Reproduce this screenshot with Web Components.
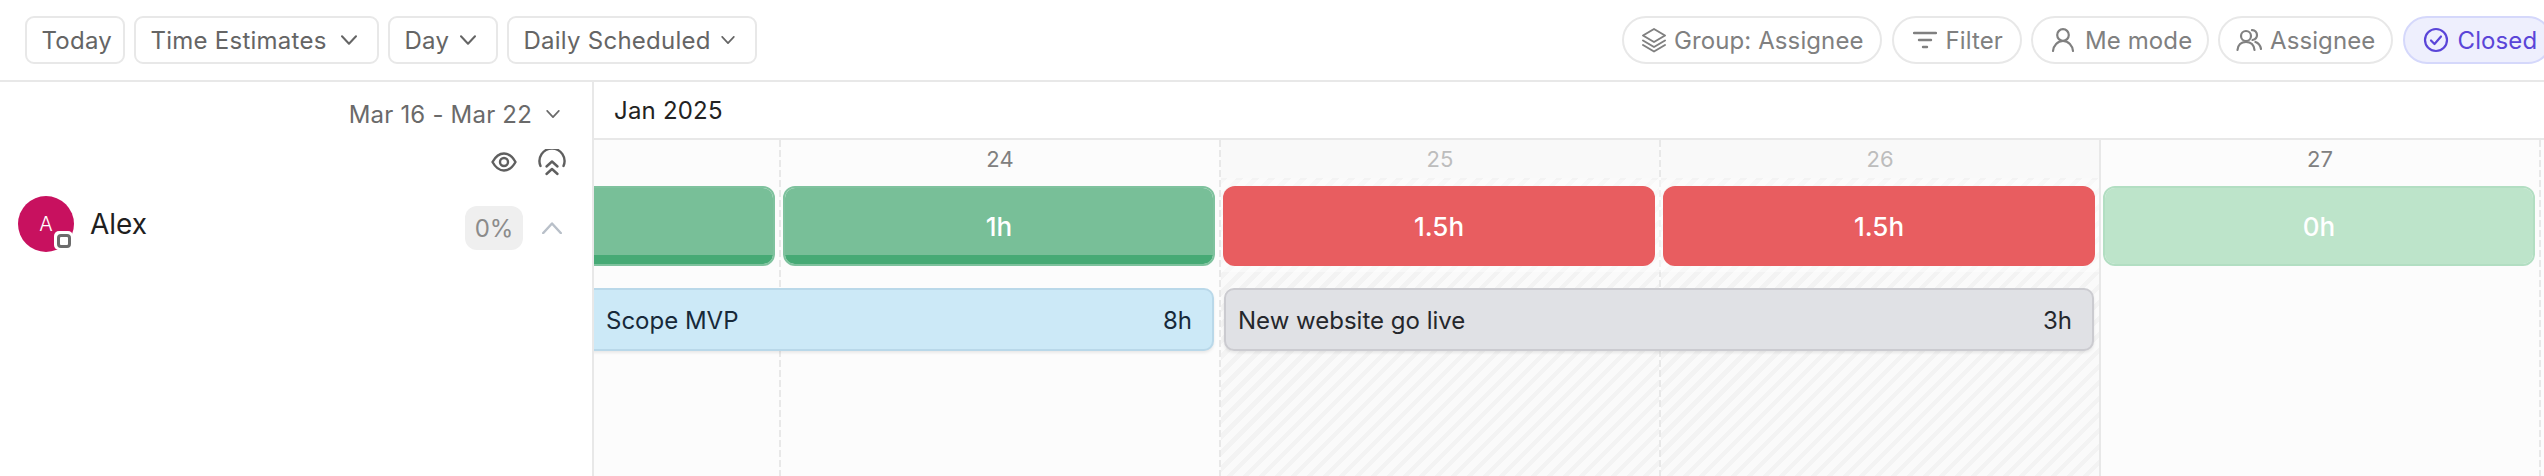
<!DOCTYPE html>
<html><head><meta charset="utf-8">
<style>
html,body{margin:0;padding:0;background:#fff;overflow:hidden}
body{font-family:Inter,"Liberation Sans",sans-serif;width:2544px;height:476px}
</style></head><body>
<plan-app>
  <plan-toolbar>
    <tool-button slot="left" style="width:100px">Today</tool-button>
    <tool-button slot="left" style="width:245px" chevron="16">Time Estimates</tool-button>
    <tool-button slot="left" style="width:110px" chevron="16">Day</tool-button>
    <tool-button slot="left" style="width:250px" chevron="14">Daily Scheduled</tool-button>
    <tool-pill slot="right" style="width:260px;--pl:17px;--gap:7px" icon="layers">Group: Assignee</tool-pill>
    <tool-pill slot="right" style="width:130px;--pl:19px;--gap:9px" icon="filter">Filter</tool-pill>
    <tool-pill slot="right" style="width:177.5px;--pl:18px;--gap:10px" icon="user">Me mode</tool-pill>
    <tool-pill slot="right" style="width:175px;--pl:16px;--gap:8px" icon="users">Assignee</tool-pill>
    <tool-pill slot="right" style="width:149.5px;--pl:18px;--gap:9px" icon="check" active>Closed</tool-pill>
  </plan-toolbar>
  <plan-body>
    <plan-sidebar slot="side" range="Mar 16 - Mar 22" name="Alex" load="0%" initial="A"></plan-sidebar>
    <plan-timeline slot="main" month="Jan 2025">
      <day-col style="grid-column:1"></day-col>
      <day-col style="grid-column:2" date="24"></day-col>
      <day-col style="grid-column:3" date="25" off></day-col>
      <day-col style="grid-column:4" date="26" off></day-col>
      <day-col style="grid-column:5" date="27" solid></day-col>
      <day-col style="grid-column:6"></day-col>
      <row-veil style="grid-column:3 / span 2"></row-veil>
      <load-bar style="grid-column:1" kind="ok"></load-bar>
      <load-bar style="grid-column:2" kind="ok">1h</load-bar>
      <load-bar style="grid-column:3" kind="over">1.5h</load-bar>
      <load-bar style="grid-column:4" kind="over">1.5h</load-bar>
      <load-bar style="grid-column:5" kind="empty">0h</load-bar>
      <task-bar style="grid-column:1 / span 2" kind="blue" hours="8h" inset="261">Scope MVP</task-bar>
      <task-bar style="grid-column:3 / span 2" kind="grey" hours="3h" inset="12">New website go live</task-bar>
    </plan-timeline>
  </plan-body>
</plan-app>
<script>
const ICONS={
 layers:'<svg width="26" height="26" viewBox="0 0 26 26" fill="none" stroke="currentColor" stroke-width="2" stroke-linejoin="round" stroke-linecap="round"><path d="M13 2 24 8.500 13 15 2 8.500Z"/><path d="M2 13.500 13 20 24 13.500"/><path d="M2 18 13 24.500 24 18"/></svg>',
 filter:'<svg width="24" height="24" viewBox="0 0 24 24" fill="none" stroke="currentColor" stroke-width="2.400" stroke-linecap="round"><path d="M1 5H23"/><path d="M6 12H18"/><path d="M10 19H14"/></svg>',
 user:'<svg width="24" height="24" viewBox="0 0 24 24" fill="none" stroke="currentColor" stroke-width="2.200" stroke-linecap="round"><circle cx="12" cy="7" r="5.800"/><path d="M2 23C2.500 17.500 6.500 13 12 13S21.500 17.500 22 23"/></svg>',
 users:'<svg width="26" height="24" viewBox="0 0 26 24" fill="none" stroke="currentColor" stroke-width="2.200" stroke-linecap="round"><circle cx="10" cy="8" r="5"/><path d="M1.500 22C2 17 5 14 10 14S18 17 18.500 22"/><path d="M16 2.200C19 2 21 4.200 21 7S19 11.500 16.500 12"/><path d="M19.500 14C22.500 15 24.500 18 25 21"/></svg>',
 check:'<svg width="26" height="26" viewBox="0 0 26 26" fill="none" stroke="currentColor" stroke-width="2.200" stroke-linecap="round" stroke-linejoin="round"><circle cx="13" cy="13" r="11"/><path d="M8 13.500 11.500 17 18 9.500"/></svg>'
};
const chev=(w,c='currentColor',up=false)=>`<svg width="${w}" height="${Math.round(w*.6)}" viewBox="0 0 16 9.600" fill="none" stroke="${c}" stroke-width="2" stroke-linecap="round" stroke-linejoin="round"><path d="${up?'M1 8.800 8 1.200 15 8.800':'M1 1 8 8.600 15 1'}"/></svg>`;
function def(name,render){customElements.define(name,class extends HTMLElement{connectedCallback(){if(!this.shadowRoot){this.attachShadow({mode:'open'}).innerHTML=render(this)}}})}

def('plan-app',()=>`<style>:host{display:flex;flex-direction:column;width:2544px;height:476px;overflow:hidden;background:#fff}</style><slot></slot>`);
def('plan-toolbar',()=>`<style>
:host{display:flex;flex:none;height:64px;border-bottom:2px solid #e8e8e8;padding:16px 0 0 25px;overflow:hidden}
.g{display:flex;gap:9px;height:48px;flex:none}
.r{margin-left:auto;margin-right:-8px;gap:9.500px}
</style><div class="g"><slot name="left"></slot></div><div class="g r"><slot name="right"></slot></div>`);
def('tool-button',h=>`<style>
:host{display:inline-flex;align-items:center;justify-content:space-between;flex:none;height:48px;box-sizing:border-box;padding:0 ${h.hasAttribute('chevron')?'20px':'14px'} 0 14.500px;border:2px solid #e8e8e8;border-radius:9px;font-size:24px;letter-spacing:.25px;color:#656565;background:#fff;white-space:nowrap}
svg{display:block}
</style><slot></slot>${h.hasAttribute('chevron')?chev(+h.getAttribute('chevron')):''}`);
def('tool-pill',h=>{const a=h.hasAttribute('active');return `<style>
:host{display:inline-flex;align-items:center;flex:none;gap:var(--gap,8px);height:48px;box-sizing:border-box;padding:0 0 0 var(--pl,17px);border:2px solid ${a?'#d5d8fb':'#e8e8e8'};border-radius:24px;font-size:24px;letter-spacing:.1px;color:${a?'#5a45d8':'#808080'};background:${a?'#eeeffd':'#fff'};white-space:nowrap}
svg{display:block;flex:none}
</style>${ICONS[h.getAttribute('icon')]}<slot></slot>`});
def('plan-body',()=>`<style>:host{display:flex;flex:1;min-height:0}</style><slot name="side"></slot><slot name="main"></slot>`);
def('plan-sidebar',h=>`<style>
:host{display:flex;flex-direction:column;flex:none;width:594px;box-sizing:border-box;border-right:2px solid #e8e8e8;background:#fff}
.range{display:flex;justify-content:flex-end;align-items:center;gap:14px;height:64px;padding-right:32px;font-size:24px;letter-spacing:.2px;color:#6a6a6a}
.icons{display:flex;justify-content:flex-end;align-items:center;gap:21px;height:28px;padding:2px 26px 0 0;color:#5f5f5f}
.user{display:flex;align-items:center;height:56px;margin-top:20px;padding:0 30px 0 18px}
.name{font-size:28px;color:#1f1f1f;margin-left:16px;flex:1}
.pct{display:flex;align-items:center;justify-content:center;width:58px;height:44px;margin-top:8px;border-radius:12px;background:#efefef;color:#8b8b8b;font-size:24px}
.up{display:flex;margin:8px 0 0 19px}
svg{display:block}
</style>
<div class="range"><span>${h.getAttribute('range')}</span>${chev(14)}</div>
<div class="icons">
<svg width="26" height="20" viewBox="0 0 26 20" fill="none" stroke="currentColor" stroke-width="2.400" stroke-linejoin="round"><path d="M1.500 10C4.500 4.500 8.500 1.500 13 1.500S21.500 4.500 24.500 10C21.500 15.500 17.500 18.500 13 18.500S4.500 15.500 1.500 10Z"/><circle cx="13" cy="10" r="4"/></svg>
<svg width="28" height="27" viewBox="0 0 28 27" fill="none" stroke="currentColor" stroke-width="2.400" stroke-linecap="round" stroke-linejoin="round"><path d="M2.500 17A12.500 12.500 0 1 1 25.500 17"/><path d="M8.500 17.500 14 12.500 19.500 17.500"/><path d="M8.500 25 14 20 19.500 25"/></svg>
</div>
<div class="user"><user-avatar initial="${h.getAttribute('initial')}"></user-avatar><span class="name">${h.getAttribute('name')}</span><span class="pct">${h.getAttribute('load')}</span><span class="up">${chev(20,'#b9c0c9',true)}</span></div>`);
def('user-avatar',h=>`<style>
:host{display:flex;position:relative;flex:none;width:56px;height:56px;border-radius:50%;background:#c8115f;color:#fff;align-items:center;justify-content:center;font-size:20px;font-weight:300}
.b{position:absolute;right:1px;bottom:2px;width:19px;height:19px;box-sizing:border-box;background:#fff;border-radius:5px;display:flex;align-items:center;justify-content:center}
.b i{display:block;width:14px;height:14px;box-sizing:border-box;border:3px solid #6c6c6c;border-radius:4px}
</style>${h.getAttribute('initial')}<span class="b"><i></i></span>`);
def('plan-timeline',h=>`<style>
:host{display:flex;flex-direction:column;flex:1;min-width:0;background:#fff}
.m{flex:none;height:56px;display:flex;align-items:center;padding-left:20px;font-size:24px;letter-spacing:.2px;color:#222;border-bottom:2px solid #e8e8e8}
.v{flex:1;overflow:hidden;background:#fcfcfc}
.g{display:grid;margin-left:-255px;width:2640px;height:336px;grid-template-columns:repeat(6,440px);grid-template-rows:40px 92px 204px}
</style><div class="m">${h.getAttribute('month')}</div><div class="v"><div class="g"><slot></slot></div></div>`);
def('day-col',h=>{const off=h.hasAttribute('off');const solid=h.hasAttribute('solid');return `<style>
:host{display:flex;flex-direction:column;grid-row:1 / -1;box-sizing:border-box;min-width:0;padding-left:2px;
background:${solid?'linear-gradient(#e8e8e8,#e8e8e8) 0 0 / 2px 100% no-repeat':'linear-gradient(#e8e8e8 70%,transparent 70%) 0 0 / 2px 10px repeat-y'}}
.d{flex:none;height:38px;display:flex;align-items:center;justify-content:center;font-size:22px;line-height:38px;color:${off?'#bdbdbd':'#808080'};background:${off?'#f9f9f9':'transparent'}}
.h{flex:1;${off?'background:repeating-linear-gradient(135deg,#f3f3f3 0 4.500px,#fafafa 4.500px 11.300px);':''}}
</style><div class="d">${h.getAttribute('date')||''}</div><div class="h"></div>`});
def('row-veil',()=>`<style>:host{display:block;grid-row:2;margin:0 0 0 2px;background:rgba(255,255,255,.4)}</style>`);
def('load-bar',h=>{const k=h.getAttribute('kind');const c={ok:['#78bf98','#7fc29e'],over:['rgba(230,75,79,.9)','transparent'],empty:['#bde4ca','#b2dec2']}[k];return `<style>
:host{display:flex;position:relative;grid-row:2;margin:6px 4px;box-sizing:border-box;border:2px solid ${c[1]};border-radius:12px;background:${c[0]};background-clip:${k==='over'?'border-box':'padding-box'};color:#fff;font-size:26px;font-weight:500;align-items:center;justify-content:center;overflow:hidden}
.s{position:absolute;left:0;right:0;bottom:0;height:9px;background:#46aa75;border-radius:0 0 10px 10px}
</style><slot></slot>${k==='ok'?'<span class="s"></span>':''}`});
def('task-bar',h=>{const k=h.getAttribute('kind');const c={blue:['#cce9f7','#b9d8e9','#17293a'],grey:['#e0e1e5','#cbcbd0','#25272c']}[k];return `<style>
:host{display:flex;align-items:center;justify-content:space-between;grid-row:3;align-self:start;height:63px;margin:16px 5px 0 ${k==='blue'?4:5}px;box-sizing:border-box;border:2px solid ${c[1]};border-radius:10px;background:${c[0]};color:${c[2]};font-size:24px;line-height:29px;padding:2px 20px 0 ${+h.getAttribute('inset')}px;box-shadow:0 2px 3px rgba(0,0,0,.08)}
</style><span><slot></slot></span><span>${h.getAttribute('hours')}</span>`});
</script>
</body></html>
